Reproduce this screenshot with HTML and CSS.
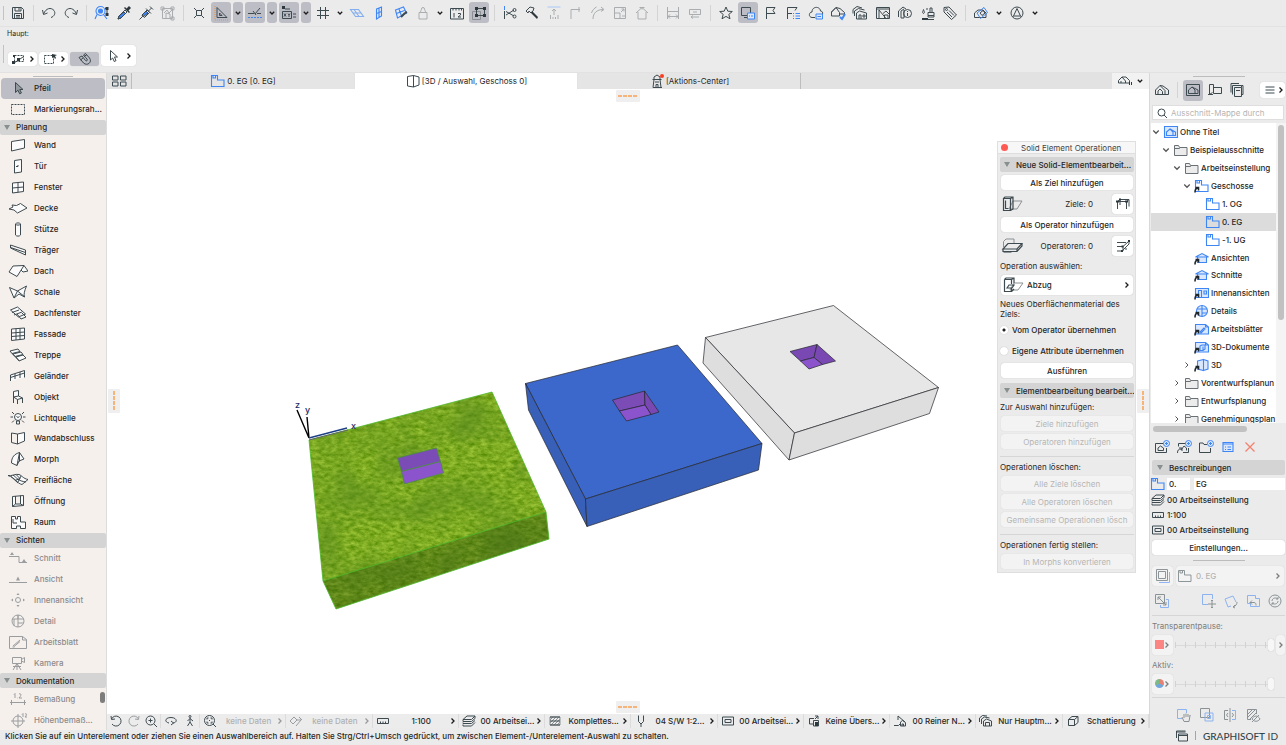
FILE: index.html
```
<!DOCTYPE html>
<html lang="de">
<head>
  <meta charset="UTF-8"/>
  <meta name="viewport" content="width=device-width, initial-scale=1.0"/>
  <title>Ohne Titel – 3D / Auswahl</title>
  <link rel="stylesheet" href="styles.css">
</head>
<body>
  <!-- shared symbols -->
  <svg class="sprite" aria-hidden="true">
    <symbol id="right" viewBox="0 0 6 8"><path d="M1.5 1.5L4 4 1.5 6.5"/></symbol>
    <symbol id="down" viewBox="0 0 8 6"><path d="M1.8 1.8L4 4l2.200-2.200"/></symbol>
    <symbol id="story" viewBox="0 0 16 14"><path d="M1.500 1.500h6v4.500h6.500v6.500h-12.500zM3 1.500v2.500h2.500v-2.500"/></symbol>
    <symbol id="folder" viewBox="0 0 16 14"><path class="fold" d="M1.500 2.500v10h12.500v-8h-7.500l-1-2zM1.500 5.500h5l1-1"/></symbol>
    <symbol id="house" viewBox="0 0 16 14"><path d="M1.500 12v-5l4.500-4.500 3 1 5 4v4.500zM4 12V8l2-2 2.500 2.500V12M6 2.500l5 5v4.500"/></symbol>
    <symbol id="link" viewBox="0 0 8 8"><path class="alias" d="M1 7.500c0-3 1-4.500 3-4.500M1.500 2.500h3v3"/></symbol>
    <symbol id="layers" viewBox="0 0 16 14"><path d="M2 5.500l4-3.500h8l-3.500 3.500zM2 5.500V7.500h8.500L14 4.500V2M2 8.500v1h8.500L14 6.500M2 10.500v1.500h8.500L14 8.500"/></symbol>
    <symbol id="scale" viewBox="0 0 16 14"><path d="M2.500 4.500h11v5h-11zM5.500 9.500v-2M8 9.500v-2M10.500 9.500v-2"/></symbol>
    <symbol id="frame" viewBox="0 0 16 14"><path d="M2.500 3h11v8h-11zM5 5.500h6v3H5z"/></symbol>
  </svg>

  <header class="toolbar">
    <i class="grip"></i>
    <button class="tb" aria-label="Sichern"><svg class="ic"><path d="M2.500 2.500h9l2 2v9h-11zM5 2.500V6h6V2.500M9 3v2.500M4.500 13.500v-5h7v5M6 10.500h4M6 12h4"/></svg></button>
    <i class="sep"></i>
    <button class="tb" aria-label="Widerrufen"><svg class="ic"><path d="M1.500 5l1 4.500 4-1.500M2.500 9C5 3 10 2 13 5.500c2 3 0 6-3 7"/></svg></button>
    <button class="tb" aria-label="Wiederholen"><svg class="ic"><path d="M14.500 5l-1 4.500-4-1.500M13.500 9C11 3 6 2 3 5.500c-2 3 0 6 3 7"/></svg></button>
    <i class="sep"></i>
    <button class="tb" aria-label="Suchen"><svg class="ic blue"><circle cx="6.500" cy="6" r="4.500"/><circle class="fillblue" cx="6.500" cy="6" r="2"/><path d="M3 9.500L1 14M9.500 9.500L13 14"/><path class="dark" d="M11 3.500h2V9.500"/><path class="solid" d="M11.500 2h3v3h-3zM11.500 8h3v3h-3z"/></svg></button>
    <button class="tb" aria-label="Parameter aufnehmen"><svg class="ic"><path class="fillblue" d="M2 14l1-3 5-4 1.500 1.500L5 13z"/><path d="M2 14l1-3 6-6 2 2-6 6z"/><path class="solid" d="M8 3l5 5 1-1-1.500-1.500L15 3l-2-2-2.500 2.500L9 2z"/></svg></button>
    <button class="tb" aria-label="Parameter übertragen"><svg class="ic"><path class="fillblue" d="M4 10l4-4 2 2-5 4z"/><path d="M1.500 14.500l3-3M4 10l5-5 2.500 2.500-5 5zM8 3.500L13 8.500M10.500 6l3-3M12 1.500L15 4.500"/></svg></button>
    <button class="tb" aria-label="Einpassen"><svg class="ic pale"><path d="M2.500 3.500h10v10h-10zM4 8l3-3 2 3 3-3M6 13V8l4 1v4"/><path d="M1 2h3v3H1zM11 2h3v3h-3zM11 12h3v3h-3z"/></svg></button>
    <i class="sep"></i>
    <button class="tb" aria-label="Fang"><svg class="ic"><path d="M5.500 5.500h5v5h-5zM3 3l2.500 2.500M13 3l-2.500 2.500M3 13l2.500-2.500M13 13l-2.500-2.500"/></svg></button>
    <button class="tb on" aria-label="Führungslinien"><svg class="ic"><path d="M4 2.500v10h10zM6.500 8v2.500H9z"/><path class="orange" d="M2 1v14h13"/></svg></button>
    <button class="dd on" aria-label="Mehr"><svg class="dn"><use href="#down"/></svg></button>
    <button class="tb on" aria-label="Fanghilfe"><svg class="ic"><path d="M1 8.500h6M6 6l3 4M8 9l5-6M10 8.500h4"/><path class="bluedash" d="M1 12.500h14"/></svg></button>
    <button class="dd on" aria-label="Mehr"><svg class="dn"><use href="#down"/></svg></button>
    <button class="tb on" aria-label="Tracker"><svg class="ic"><path d="M1.500 6.500h9v7h-9zM3 8.500l2 3M5 8.500l-2 3M7 8.500l1 1.500 1-1.500M8 10v2M12 9h3M12 12h3M4 4h5"/><path class="solid" d="M1 1h3v3H1z"/></svg></button>
    <button class="dd on" aria-label="Mehr"><svg class="dn"><use href="#down"/></svg></button>
    <button class="tb" aria-label="Raster"><svg class="ic"><path d="M5.500 2v12M10.500 2v12M2 5.500h12M2 10.500h12"/></svg></button>
    <button class="dd" aria-label="Mehr"><svg class="dn"><use href="#down"/></svg></button>
    <button class="tb" aria-label="Ebene"><svg class="ic blue faded"><path d="M1.500 4.500h8l5 7h-8zM4 8h8M5 4.500l5 7"/></svg></button>
    <button class="tb" aria-label="Vertikale Ebene"><svg class="ic blue"><path class="fillpale" d="M5.500 4l5-2v9l-5 3zM5.500 8.500l5-2M8 3v9.500"/></svg></button>
    <button class="tb" aria-label="Ebene wählen"><svg class="ic blue"><path d="M2.500 5l8-3 3 6-9 5zM6 4l2.500 7M3.500 8.500l8-3"/><path class="dark thick" d="M8 12l4-4M12 8l2-1"/></svg></button>
    <button class="tb" aria-label="Gewicht"><svg class="ic pale"><path d="M4 7.500h8v6.500H4zM5.500 7.500c0-2 1-2.500 1-3.500a1.500 1.500 0 1 1 3 0c0 1 1 1.500 1 3.500"/></svg></button>
    <button class="dd" aria-label="Mehr"><svg class="dn"><use href="#down"/></svg></button>
    <button class="tb" aria-label="Maße"><svg class="ic"><path d="M1.500 14V3.500h13V14zM4 3.500v2M7 3.500v2M10 3.500v2M12.500 3.500v2M5 8v4.500M9 8.500h2.500v1.500L9 12h3"/></svg></button>
    <button class="tb on" aria-label="Gruppierung"><svg class="ic"><path class="soft" d="M1.500 6.500h8v8h-8z"/><path d="M5.500 3.500h8v7h-8z"/><path class="solid" d="M4 2h3v3H4zM12 2h3v3h-3zM4 9h3v3H4zM12 9h3v3h-3z"/></svg></button>
    <i class="sep"></i>
    <button class="tb" aria-label="Trimmen"><svg class="ic"><path class="bluestroke" d="M2.500 1v4"/><path d="M2.500 6v8M4 10l8-5M4 6.500l8 4.500"/><circle cx="12.500" cy="5" r="1.500"/><circle cx="12.500" cy="11.500" r="1.500"/></svg></button>
    <button class="tb" aria-label="Anpassen"><svg class="ic"><path d="M2 6l4-4 4 1-1 3-2 2-2-2-1 2zM8 7l5 6"/><path class="solid" d="M8 6l6 6-1 2-6-6z"/></svg></button>
    <button class="tb" aria-label="Verlängern"><svg class="ic pale"><path class="bluestroke" d="M1.500 2h13"/><path d="M8 10V4M6 6l2-2 2 2M4.500 10v4M7 12v2M9.500 12v2M12 10v4"/></svg></button>
    <button class="tb" aria-label="Verschneiden"><svg class="ic pale"><path d="M3 14V4.500h9M11 2v5"/></svg></button>
    <button class="tb" aria-label="Abrunden"><svg class="ic pale"><path d="M3 14c0-6 4-9.500 10-9.500M11 2l3 2.500-3 2M1.500 8c1-3 3-5 5-6"/></svg></button>
    <button class="tb" aria-label="Größe ändern"><svg class="ic pale"><path d="M2.500 2.500h11v11h-11zM2.500 8H8v5.500M9 7l3-3M9.500 4H12v2.500M10 11h3"/></svg></button>
    <button class="tb" aria-label="Dach trimmen"><svg class="ic pale"><path d="M2 8l6-5.500L14 8M4 7v7h8V7M5.500 2.500h5M8 2.500v2"/></svg></button>
    <i class="sep"></i>
    <button class="tb" aria-label="Bemaßung oben"><svg class="ic pale"><path d="M2.500 2v12M13.500 2v12M2.500 6.500h11M3 11.500h10M5 9.500l-2 2 2 2M11 9.500l2 2-2 2"/></svg></button>
    <button class="tb" aria-label="Bemaßung unten"><svg class="ic pale"><path d="M2.500 4.500h11v5h-11zM4 12h8M6 7h4M6 10.500L4 12l2 1.500"/></svg></button>
    <i class="sep"></i>
    <div class="views">
      <button class="tb" aria-label="Favoriten"><svg class="ic"><path d="M8 2l1.800 4.200 4.500.3-3.500 2.900 1.200 4.400L8 11.400l-4 2.400 1.200-4.400L1.700 6.500l4.500-.3z"/></svg></button>
      <button class="tb on" aria-label="Bildschirm"><svg class="ic"><path d="M1.500 2.500h9v8h-9zM4 12.500h3"/><path class="bluestroke fillpale" d="M7.500 8h7v6h-7zM9 11h1M11 11h2"/></svg></button>
      <button class="tb" aria-label="Fahne"><svg class="ic"><path d="M3.500 14V2.500H12l-2 3 2 3H3.500"/></svg></button>
      <button class="tb" aria-label="Fahnenliste"><svg class="ic"><path d="M2.500 14V2.500H12l-2 3M2.500 8.500H7"/><path class="bluestroke" d="M8 8.500h1M10.500 8.500H15M8 11h1M10.500 11H15M8 13.500h1M10.500 13.500H15"/></svg></button>
      <button class="tb" aria-label="Cloud"><svg class="ic"><path d="M7 12.500H4C0 12 1 7 4 7c0-6 8-6 8.500-1 2 0 2.500 2 2 3"/><path class="bluestroke fillpale" d="M8 9h6.500v5H8zM9.500 11.500h3.500"/></svg></button>
      <button class="tb" aria-label="Prüfen"><svg class="ic"><path d="M1.500 11V7L6 2.500l4 1 4.500 4V9H9.500v2zM6 2.500l3.500 5V9M1.500 7L6 2.500"/><path class="bluestroke thick" d="M10 12l2 2 3-5"/></svg></button>
      <button class="tb" aria-label="Kopien"><svg class="ic"><path d="M4.500 14V8l3-2 7 2v6zM2.500 11V6l4-2.500 6 1.500M1 8.500V4.500l4-3L10 3M7 14v-4h2v4M11 10h2v2h-2z"/></svg></button>
      <button class="tb" aria-label="Layout"><svg class="ic"><path d="M1.500 2.500h13v11h-13zM1.500 4h13M4 13.500V5l7 8.500M8 8.500L11 6l3 3M9.500 13V10H13v3.500"/></svg></button>
      <button class="tb" aria-label="Info"><svg class="ic"><path d="M1.500 12V6L6 2l3 2M4 13V6l3-2M4 13h3V5"/><circle cx="10.500" cy="8.500" r="4"/><path d="M10.500 8v3M10.500 6v1"/></svg></button>
      <button class="tb" aria-label="Oberflächen"><svg class="ic"><path d="M8 7.500h6v3H8zM10 7.500V3h2v4.500M8 10.500V12h6v-1.500M2 14.500h12M3.500 8.500c-2-1 0-3 0-4 0 1 2 3 0 4M7 5V3"/><path class="solid" d="M2 13h6v1.500H2z"/></svg></button>
      <button class="tb" aria-label="Etikett"><svg class="ic"><path d="M2 2.500l5-.5 7.500 8-5 4.500L2 7zM5 7l5 5M7 5.500l5 5"/><circle cx="4.500" cy="4.500" r="1"/></svg></button>
    </div>
    <i class="sep"></i>
    <button class="tb" aria-label="Modell"><svg class="ic"><path d="M1.500 12.500V8L5 5h5l3 3v4.500z"/><path class="bluestroke" d="M4 8l7-5.500 3.500 5-7 6z"/><path d="M7 8l3-2.500 2 2.500-3 2.500z"/></svg></button>
    <button class="dd wide" aria-label="Mehr"><svg class="dn"><use href="#down"/></svg></button>
    <button class="tb" aria-label="BIMcloud"><svg class="ic"><circle cx="8" cy="8" r="6"/><path d="M8 3.500l3.500 7.500h-7zM4.500 11l-1 1M11.500 11l1 1"/></svg></button>
    <button class="dd wide" aria-label="Mehr"><svg class="dn"><use href="#down"/></svg></button>
  </header>

  <section class="infobox">
    <p>Haupt:</p>
    <div class="infobtns">
      <i class="grip"></i>
      <button class="pill" aria-label="Auswahlart"><svg class="ic"><path class="dots" d="M3.500 4.500h9v6h-9z"/><path d="M3 12L12 6"/><path class="solid" d="M1 10h3v3H1zM2 4h2v2H2zM6 7h3v3H6z"/></svg><svg class="rt"><use href="#right"/></svg></button>
      <button class="pill" aria-label="Markierung"><svg class="ic"><path class="dots" d="M2.500 4.500h9v8h-9z"/><path class="solid" d="M10 3l5 1-2 1 1 2-1 1-1-2-2 1z"/></svg><svg class="rt"><use href="#right"/></svg></button>
      <button class="pill on" aria-label="Magnet"><svg class="ic"><path d="M2 6.500L5 5l3.500 4.500c1 1 2.500 0 1.500-1.500L6.500 4l2-1.500L12.500 7c3 4-2 8.500-6 5zM3.500 9L6 7M7 5.500l3-2"/></svg></button>
      <button class="pill tall" aria-label="Pfeil"><svg class="ic"><path d="M5.500 2.500v9.500l2.200-2 1.500 3.500 1.800-.8L9.500 9h3z"/></svg><svg class="rt"><use href="#right"/></svg></button>
    </div>
  </section>

  <main>
    <nav class="toolbox">
      <i class="bar"></i>
      <button class="tool sel"><svg class="ti"><path class="arrowfill" d="M7.500 2.500v10l2.500-2.300 1.600 3.600 1.800-.8-1.600-3.500h3.200z"/></svg>Pfeil</button>
      <button class="tool"><svg class="ti"><path class="dots" d="M3.500 3.500h13v10h-13z"/></svg>Markierungsrah...</button>
      <button class="sec"><i></i>Planung</button>
      <button class="tool"><svg class="ti"><path class="w" d="M3.500 4.500l13-2v8.500l-13 3z"/></svg>Wand</button>
      <button class="tool"><svg class="ti"><path class="w" d="M6.500 2.500l7-1V14l-7 1zM8 8.500h2v-1.500"/></svg>Tür</button>
      <button class="tool"><svg class="ti"><path class="w" d="M4.500 4l11-1v9.500l-11 1.500zM10 3.500v10M4.500 9l11-1"/></svg>Fenster</button>
      <button class="tool"><svg class="ti"><path class="w" d="M1 9l4-2-1-2 4.500.500 4-2L19 8l-9.500 5L6 10z"/></svg>Decke</button>
      <button class="tool"><svg class="ti"><path class="w" d="M7.500 3v11c1 1.500 4 1.500 5 0V3M7.500 3c1 1.500 4 1.500 5 0-1-1.500-4-1.500-5 0z"/></svg>Stütze</button>
      <button class="tool"><svg class="ti"><path class="w" d="M2.500 3l15 5v5l-15-7zM2.500 3v2.500l15 5"/></svg>Träger</button>
      <button class="tool"><svg class="ti"><path class="w" d="M1 9l4-6 11-.500-7 11zM16 2.500L20 8l-5 1-2-2"/></svg>Dach</button>
      <button class="tool"><svg class="ti"><path class="w" d="M1.500 3.500l8 3.500 9-5c-2 5-3 8-2 11L11 10l-5 4zM6 14l3.500-7L17 13"/></svg>Schale</button>
      <button class="tool"><svg class="ti"><path class="w" d="M2.500 5l7-3 8 7-7 3zM4 7.500l7-2.500M6 10l8-3M9 9l4 5 5-2-4-4"/></svg>Dachfenster</button>
      <button class="tool"><svg class="ti"><path class="w" d="M3.500 3l13-1v11l-13 1.500zM8 2.500V14M12 2.500v11M3.500 7l13-1M3.500 10.500l13-1"/></svg>Fassade</button>
      <button class="tool"><svg class="ti"><path class="w" d="M2 4l8-2 2 2.500-8 2zM5 7l8-2 2 2.500-8 2zM8 10l7-2 3 3-7 3zM4 6.500l7 7"/></svg>Treppe</button>
      <button class="tool"><svg class="ti"><path class="w" d="M2.500 13V7l14-4.500v7M2.500 9.500l14-4.500M7 11V6M12 10V4"/></svg>Geländer</button>
      <button class="tool"><svg class="ti"><path class="w" d="M5.500 8V2.500l5-1V7M5.500 8l5-1 4 2-5 1.500zM5.500 8v6M9.500 10.500V15M14.500 9v5"/></svg>Objekt</button>
      <button class="tool"><svg class="ti"><circle class="w" cx="10" cy="7" r="3.500"/><path d="M8.500 11h3v3h-3zM8.500 6.500l1.500 1 1.500-1M2.500 7h2.500M15 7h2.500M4 2l2 2M16 2l-2 2M4 12.500l2-2M16 12.500l-2-2"/></svg>Lichtquelle</button>
      <button class="tool"><svg class="ti"><path d="M3.500 3l6 1v10l-6-1.500z"/><path class="w" d="M9.500 4l7-1.500V11l-7 3z"/></svg>Wandabschluss</button>
      <button class="tool"><svg class="ti"><path class="w" d="M3.500 12c0-6 3-9 8-10.500L16 8l-5 2-2 4.500zM11.500 1.500L9 14.500M11.500 1.500v9"/></svg>Morph</button>
      <button class="tool"><svg class="ti"><path class="w" d="M0 3.500c3 1 8-2 11-1s4 4 9 5l-6 5c-5-1-7-7-14-9M5 3c4 3 5 6 13 7M3 4.500L10 11M8 2.500l4 4-5 2M13 4l-3 6"/></svg>Freifläche</button>
      <button class="tool"><svg class="ti"><path class="w" d="M4.500 3.500l11-1v10l-11 1zM7.500 3v8h5V2.500M7.500 11l-3 2.500M12.500 11l3 1.500"/></svg>Öffnung</button>
      <button class="tool"><svg class="ti"><path class="w" d="M3.500 2.500h4V5h2V2.500h3V8h5v6.500h-5V12h-4v2.500h-5z"/><path d="M5 5v4h4"/></svg>Raum</button>
      <button class="sec"><i></i>Sichten</button>
      <button class="tool off"><svg class="ti"><path d="M1 6.500h10v6h8"/><path class="solid" d="M2 5l2-3 2 3zM14 12l2-3 2 3z"/></svg>Schnitt</button>
      <button class="tool off"><svg class="ti"><path d="M1 11.500h18"/><path class="solid" d="M8 9.500l2-4 2 4z"/></svg>Ansicht</button>
      <button class="tool off"><svg class="ti"><circle cx="10" cy="8" r="2.500"/><path class="solid" d="M5 6.500v3L3 8zM15 6.500v3L17 8zM8.500 3h3L10 1zM8.500 13h3L10 15z"/></svg>Innenansicht</button>
      <button class="tool off"><svg class="ti"><circle cx="10" cy="8" r="6"/><path d="M4 6h6V2M10 2v12M6 6v7M10 6h6M10 10h5.500"/></svg>Detail</button>
      <button class="tool off"><svg class="ti"><path d="M1.500 2.500h13l4 3v9h-17zM14.500 2.500V6h4M5 12l7-6M6 12.500l6-5M4.500 13h2"/></svg>Arbeitsblatt</button>
      <button class="tool off"><svg class="ti"><path d="M4.500 2.500h9v6h-9zM13.500 4.500l3-2v5l-3-1.500M9 8.500L5 15M9 8.500V15M9 8.500l4 6.500M5 11.500h8"/></svg>Kamera</button>
      <button class="sec"><i></i>Dokumentation</button>
      <button class="tool off"><svg class="ti"><path d="M2 11.500h16M3.500 9v5M16.500 9v5M6 3.500l1-1V7M9 7h.500M11 3c2-1 3 1 0 4h3"/></svg>Bemaßung</button>
      <button class="tool off"><svg class="ti"><circle cx="10" cy="9" r="5"/><path d="M3 9h14M10 2v14M14 2.500l1-1V5M17 2c2-1 2 1 0 3h2"/></svg>Höhenbemaß...</button>
      <i class="thumb"></i>
    </nav>

    <section class="center">
      <div class="tabs">
        <button class="overview" aria-label="Übersicht"><svg class="ic"><path d="M1.500 3h5.500v4H1.500zM9.500 3H15v4H9.500zM1.500 9h5.500v4H1.500zM9.500 9H15v4H9.500z"/></svg></button>
        <button class="tab"><svg class="st blue"><use href="#story"/></svg>0. EG [0. EG]</button>
        <button class="tab active"><svg class="ic"><path d="M2.500 3.500l6-1V14l-6-1zM8.500 2.500L14 4v8l-5.500 2"/></svg>[3D / Auswahl, Geschoss 0]</button>
        <button class="tab"><svg class="ic"><path d="M5 6.500h6l1 8H4zM5 6.500V4l3-2 3 2v2.500M4 14.500h9M6 9h4M7 14v-2.500h2V14M3.500 6.500h9"/><circle class="dot" cx="13" cy="3" r="2"/></svg>[Aktions-Center]</button>
        <span class="rest"></span>
        <button class="tabmore" aria-label="Ansichten"><svg class="ic"><path d="M1.500 10V7.500L5 4h4l3.500 3.500V10zM5 4l3.500 4v2M4 10V8"/><path class="solid" d="M12 9h1v3h-1zM14 9h1v3h-1z"/></svg><svg class="dn"><use href="#down"/></svg></button>
      </div>

      <div class="viewport">
        <svg class="scene" viewBox="107 89 1042 625">
          <defs>
            <filter id="grass" x="0" y="0" width="1" height="1" color-interpolation-filters="sRGB">
              <feTurbulence type="fractalNoise" baseFrequency=".16 .28" numOctaves="5" seed="7" result="n"/>
              <feColorMatrix in="n" values=".42 0 0 0 .28  .34 0 0 0 .5  .3 0 0 0 -.02  0 0 0 0 1" result="fine"/>
              <feTurbulence type="fractalNoise" baseFrequency=".025" numOctaves="2" seed="3"/>
              <feColorMatrix values="0 0 0 0 .34  0 0 0 0 .53  0 0 0 0 .12  1.200 0 0 0 -.42" result="patch"/>
              <feMerge result="m"><feMergeNode in="fine"/><feMergeNode in="patch"/></feMerge>
              <feComposite in="m" in2="SourceGraphic" operator="in"/>
            </filter>
          </defs>
          <g filter="url(#grass)"><path class="turf" d="M309 440L492 392 546 512 549 539 336 609 323 581z"/></g>
          <path class="shade" d="M323 581L546 512 549 539 336 609z"/>
          <path class="grassline" d="M309 440L492 392 546 512 549 539 336 609 323 581zM323 581L546 512"/>
          <g class="greenedge"><path class="p1" d="M397.500 458L436.500 448 440.500 461.500 401.500 471.500z"/><path class="p2" d="M401.500 471.500L440.500 461.500 443.500 473 404.500 484z"/></g>

          <g class="edge">
            <path class="b1" d="M525.500 383.500L677.500 345 762 443.500 585.500 499z"/>
            <path class="b2" d="M525.500 383.500L528.500 410 587 526.500 585.500 499z"/>
            <path class="b2" d="M585.500 499L762 443.500 758.500 470 587 526.500z"/>
            <path class="p1" d="M612.500 400L644.500 391 645 405 619.500 411z"/>
            <path class="p3" d="M644.500 391L659 412 651 414.500 645 405z"/>
            <path class="p2" d="M619.500 411L645 405 651 414.500 626.500 421z"/>
          </g>
          <g class="edge">
            <path class="g1" d="M705.500 337.500L833.500 305.500 938.500 387.500 794.500 433z"/>
            <path class="g2" d="M705.500 337.500L703 363 789 460 794.500 433z"/>
            <path class="g2" d="M794.500 433L938.500 387.500 929.500 413.500 789 460z"/>
            <path class="p3" d="M790 351.500L817 344.500 814 357.500 800.500 361z"/>
            <path class="p3" d="M817 344.500L835.500 361 822.500 364.500 814 357.500z"/>
            <path class="p2" d="M800.500 361L814 357.500 822.500 364.500 809 369z"/>
          </g>

          <path class="axis" d="M309 438L297 410M309 438L307 417"/>
          <path class="axisx" d="M309 438L347 428"/><path class="axisg" d="M309 440L348 430"/>
          <g class="axislabel"><text x="295" y="408">z</text><text x="305" y="413">y</text><text x="351" y="429">x</text></g>
        </svg>

        <i class="snap top"></i><i class="snap bottom"></i><i class="snap side left"></i><i class="snap side right"></i>

        <aside class="palette">
          <h2><button class="close" aria-label="Schließen"></button>Solid Element Operationen</h2>
          <div class="pbody">
            <button class="sec"><i></i>Neue Solid-Elementbearbeit...</button>
            <button class="btn">Als Ziel hinzufügen</button>
            <div class="prow">
              <svg class="pi"><path class="soft" d="M8 14l4-8h9l-5 8z"/><path class="bold" d="M2.500 3.500h7v12h-7zM2.500 3.500L4 2h8v12l-2.500 1.500M9.500 3.500L12 2M4.500 5.500v8h3"/></svg>
              <span>Ziele: 0</span>
              <button class="sq" aria-label="Ziele auswählen"><svg class="ic"><path d="M2.500 13V5.500h9V13M5 9V3.500M2.500 5.500L5 3.500h9v7M11.500 5.500l2.500-2"/><path class="solid" d="M1 4.500h3v2H1zM10 4.500h3v2h-3zM4 2.500h2v2H4z"/></svg></button>
            </div>
            <button class="btn">Als Operator hinzufügen</button>
            <div class="prow">
              <svg class="pi"><path class="soft" d="M2.500 10V4.500L5 2h8v5M2.500 15.500h8"/><path class="bold" d="M2 12l5-5.500h14L16 12zM2 12v2.500h14l5-5.500V6.500M16 12v2.500"/></svg>
              <span>Operatoren: 0</span>
              <button class="sq" aria-label="Operatoren auswählen"><svg class="ic"><path d="M2 4.500h9M2 8.500h5.500M2 13h5l7-7V3L8 8.500V13M10 11h2"/><path class="solid" d="M6.500 7.500h2v2h-2zM6 12h2v2H6zM13 2h2v2h-2z"/></svg></button>
            </div>
            <label for="op">Operation auswählen:</label>
            <div class="selwrap">
              <svg class="pi"><path class="soft" d="M8 14l4-7h9l-5 7z"/><path class="bold" d="M2.500 3.500h7V8M2.500 3.500v12h7V12M2.500 3.500L4 2h8v5M9.500 15.500L12 13M9.500 3.500L12 2M5 12l2-3h5l-2 3z"/></svg>
              <select id="op"><option>Abzug</option></select>
              <svg class="rt"><use href="#right"/></svg>
            </div>
            <p class="two">Neues Oberflächenmaterial des Ziels:</p>
            <label class="rad"><input type="radio" name="surf" checked>Vom Operator übernehmen</label>
            <label class="rad"><input type="radio" name="surf">Eigene Attribute übernehmen</label>
            <button class="btn">Ausführen</button>
            <button class="sec second"><i></i>Elementbearbeitung bearbeit...</button>
            <p>Zur Auswahl hinzufügen:</p>
            <button class="btn" disabled>Ziele hinzufügen</button>
            <button class="btn" disabled>Operatoren hinzufügen</button>
            <hr>
            <p>Operationen löschen:</p>
            <button class="btn" disabled>Alle Ziele löschen</button>
            <button class="btn" disabled>Alle Operatoren löschen</button>
            <button class="btn" disabled>Gemeinsame Operationen lösch</button>
            <hr>
            <p>Operationen fertig stellen:</p>
            <button class="btn" disabled>In Morphs konvertieren</button>
          </div>
        </aside>
      </div>

      <div class="quick">
        <div class="nav">
          <button aria-label="Zurück"><svg class="ic"><path d="M3.500 6A5 5 0 1 1 4 11M3 3l.500 3.500L7 6"/></svg></button>
          <button class="off" aria-label="Vor"><svg class="ic"><path d="M12.500 6A5 5 0 1 0 12 11M13 3l-.500 3.500L9 6"/></svg></button>
          <button aria-label="Vergrößern"><svg class="ic"><circle cx="7.500" cy="7.500" r="4.500"/><path d="M11 11l3 3M7.500 5.500v4M5.500 7.500h4"/></svg></button>
        </div>
        <div class="nav walk">
          <button aria-label="Orbit"><svg class="ic"><path d="M6 10C1 9 2 4.500 8 4.500s7 5 2 5.500M8 8l2.500 2L8 12"/></svg></button>
          <button aria-label="Gehen"><svg class="ic"><circle cx="8" cy="3.500" r="1"/><path d="M8 5v4l-2.500 4M8 9l2.500 4M5.500 8L8 5.500 11 8"/></svg></button>
        </div>
        <button class="q off"><svg class="ic dark"><circle cx="7.500" cy="7.500" r="5"/><path d="M11 11l3 3M5 6.500V5h1.500M8.500 5H10v1.500M5 8.500V10h1.500M8.500 10H10V8.500M7 7.500h1"/></svg><span>keine Daten</span><svg class="rt"><use href="#right"/></svg></button>
        <button class="q off"><svg class="ic"><path d="M2 8l4-4 3 3-4 4zM9 7h4l-5 6M11 4l3 3"/></svg><span>keine Daten</span><svg class="rt"><use href="#right"/></svg></button>
        <button class="q"><svg class="st"><use href="#scale"/></svg><span>1:100</span><svg class="rt"><use href="#right"/></svg></button>
        <button class="q"><svg class="st"><use href="#layers"/></svg><span>00 Arbeitsei...</span><svg class="rt"><use href="#right"/></svg></button>
        <button class="q"><svg class="st"><path class="soft" d="M3 3h10v8H3zM3 6l3-3M3 9l6-6M4 11l8-8M7 11l6-6M10 11l3-3"/><path d="M3 3h10M3 11h10M3 7h10"/></svg><span>Komplettes...</span><svg class="rt"><use href="#right"/></svg></button>
        <button class="q"><svg class="st"><path d="M5.500 1.500v6L8 10l2.500-2.500v-6M8 10v3"/></svg><span>04 S/W 1:2...</span><svg class="rt"><use href="#right"/></svg></button>
        <button class="q"><svg class="st"><use href="#frame"/></svg><span>00 Arbeitsei...</span><svg class="rt"><use href="#right"/></svg></button>
        <button class="q"><svg class="st"><path d="M7.500 10H3.500V4.500H8M7.500 6.500h5V12h-5zM9 2h3v3M12 2L9 5"/><path class="solid" d="M9 8h3v4H9z"/></svg><span>Keine Übers...</span><svg class="rt"><use href="#right"/></svg></button>
        <button class="q"><svg class="st"><path d="M2 11.500h4.500l2-2M6 2v4M6 2l7 6M8.500 12V8l2-1.500 3 2V12zM10 12v-2h1.500v2"/></svg><span>00 Reiner N...</span><svg class="rt"><use href="#right"/></svg></button>
        <button class="q"><svg class="st"><path d="M5.500 12V7l3-2 5 2v5zM3.500 10V5l3-2 5 1M1.500 8V4l3-2.500L9 2M7.500 12V8.500h4V12"/></svg><span>Nur Hauptm...</span><svg class="rt"><use href="#right"/></svg></button>
        <button class="q"><svg class="st"><path d="M3.500 5.500h6v6h-6zM3.500 5.500L7 2.500h6L9.500 5.500M13 2.500v6l-3.500 3"/></svg><span>Schattierung</span><svg class="rt"><use href="#right"/></svg></button>
      </div>
    </section>

    <aside class="navigator">
      <i class="bar"></i>
      <div class="modes">
        <button class="tb" aria-label="Projekt"><svg class="ic"><path d="M1.500 12.500V8L6 3.500l3 .5 5.500 4v4.500zM4 12.500V9l2-2 2.500 2.500v3M6 3.500l5 5v4"/></svg></button>
        <i class="sep"></i>
        <button class="tb on" aria-label="Ausschnitte"><svg class="ic"><path d="M1.500 2.500h13v11h-13zM3.500 11.500V8l3.500-3 6 3v3.500zM7 5l3 3v3.500"/></svg></button>
        <button class="tb" aria-label="Layoutbuch"><svg class="ic"><path d="M2.500 12.500v-10h4v6M2.500 12.500l3-2M6.500 5.500h8v6h-8zM1 12.500h5"/></svg></button>
        <button class="tb" aria-label="Publisher"><svg class="ic"><path d="M5.500 5.500h7v9h-7zM3.500 12.500v-9h9M2 10.500v-9h8M12.500 5.500v-2h1.500v9h-1.500M7 8.500h4"/></svg></button>
        <button class="pill menu" aria-label="Menü"><svg class="ic"><path d="M3.500 5h9M3.500 8h9M3.500 11h9"/></svg><svg class="rt"><use href="#right"/></svg></button>
      </div>
      <div class="search"><svg class="ic"><circle cx="7.500" cy="7.500" r="3.500"/><path d="M10 10l3 3"/></svg><input type="text" aria-label="Suchen" placeholder="Ausschnitt-Mappe durch"></div>

      <div class="treebox">
        <ul class="tree">
          <li class="l0"><svg class="tw"><use href="#down"/></svg><svg class="st blue"><path class="fillpale" d="M1.500 1.500h13v11h-13zM3.500 10.500V7L7 4l5.500 3v3.500zM7 4l3 3v3.500"/></svg><a href="#">Ohne Titel</a></li>
          <li class="l1"><svg class="tw"><use href="#down"/></svg><svg class="st"><use href="#folder"/></svg><a href="#">Beispielausschnitte</a></li>
          <li class="l2"><svg class="tw"><use href="#down"/></svg><svg class="st"><use href="#folder"/></svg><a href="#">Arbeitseinstellung</a></li>
          <li class="l3"><svg class="tw"><use href="#down"/></svg><svg class="st blue"><use href="#story"/><use href="#link" y="6" width="8" height="8"/></svg><a href="#">Geschosse</a></li>
          <li class="l4"><i class="tw"></i><svg class="st blue"><use href="#story"/></svg><a href="#">1. OG</a></li>
          <li class="l4 cur"><i class="tw"></i><svg class="st blue"><use href="#story"/></svg><a href="#">0. EG</a></li>
          <li class="l4"><i class="tw"></i><svg class="st blue"><use href="#story"/></svg><a href="#">-1. UG</a></li>
          <li class="l3"><i class="tw"></i><svg class="st blue"><path class="fillpale" d="M3.500 11.500V6h9v5.500zM1.500 6L8 2.500 14.500 6z"/><use href="#link" y="6" width="8" height="8"/></svg><a href="#">Ansichten</a></li>
          <li class="l3"><i class="tw"></i><svg class="st blue"><path class="fillpale" d="M3.500 11.500V6h9v5.500zM1.500 6L8 2.500 14.500 6z"/><use href="#link" y="6" width="8" height="8"/></svg><a href="#">Schnitte</a></li>
          <li class="l3"><i class="tw"></i><svg class="st blue"><path class="fillpale" d="M1.500 2.500h13v9h-13zM4.500 11V4.500h3V11M10 5h2.500v3H10z"/><use href="#link" y="6" width="8" height="8"/></svg><a href="#">Innenansichten</a></li>
          <li class="l3"><i class="tw"></i><svg class="st blue"><circle class="fillpale" cx="8" cy="7" r="5.500"/><path d="M3 5h5V1.500M8 1.500v11M8 5h5M8 9h5"/><use href="#link" y="6" width="8" height="8"/></svg><a href="#">Details</a></li>
          <li class="l3"><i class="tw"></i><svg class="st blue"><path class="fillpale" d="M1.500 2.500h10l3 2.500v7h-13zM11.500 2.500V5h3M6 10l4-4 1 1-4 4z"/><use href="#link" y="6" width="8" height="8"/></svg><a href="#">Arbeitsblätter</a></li>
          <li class="l3"><i class="tw"></i><svg class="st blue"><path class="fillpale" d="M1.500 2.500h10l3 2.500v7h-13zM11.500 2.500V5h3M6 6l2-1h3v4l-2 1.500H6zM9 6.500v4"/><use href="#link" y="6" width="8" height="8"/></svg><a href="#">3D-Dokumente</a></li>
          <li class="l3"><svg class="tr"><use href="#right"/></svg><svg class="st blue"><path class="fillpale" d="M3.500 3l6-1.500v11l-6-1.500zM9.500 1.500L14 3v8l-4.500 1.500"/><use href="#link" y="6" width="8" height="8"/></svg><a href="#">3D</a></li>
          <li class="l2"><svg class="tr"><use href="#right"/></svg><svg class="st"><use href="#folder"/></svg><a href="#">Vorentwurfsplanun</a></li>
          <li class="l2"><svg class="tr"><use href="#right"/></svg><svg class="st"><use href="#folder"/></svg><a href="#">Entwurfsplanung</a></li>
          <li class="l2"><svg class="tr"><use href="#right"/></svg><svg class="st"><use href="#folder"/></svg><a href="#">Genehmigungsplan</a></li>
        </ul>
        <div class="vscroll"><i></i></div>
      </div>
      <div class="hscroll"><i></i></div>

      <div class="actions">
        <button class="tb" aria-label="Ausschnitt sichern"><svg class="ic"><path d="M10 4.500H1.500v9h11V9M4 11.500V9l2.500-2 3 2v2.500z"/><path class="bluestroke fillpale" d="M12.500 1.500a3 3 0 1 1 0 6 3 3 0 1 1 0-6zM12.500 3v3M11 4.500h3"/></svg></button>
        <button class="tb" aria-label="Ausschnitt klonen"><svg class="ic"><path d="M10 4.500H2.500v3M7 13.500h5.500V9M5 11l3-4 2.500 2v2.500M1.500 14c0-3 1-4 4-4M3 9h3v3"/><path class="bluestroke fillpale" d="M12.500 1.500a3 3 0 1 1 0 6 3 3 0 1 1 0-6zM12.500 3v3M11 4.500h3"/></svg></button>
        <button class="tb" aria-label="Neue Mappe"><svg class="ic"><path d="M9 5.500H6L5 4H1.500v9.500h11V9"/><path class="bluestroke fillpale" d="M12.500 1.500a3 3 0 1 1 0 6 3 3 0 1 1 0-6zM12.500 3v3M11 4.500h3"/></svg></button>
        <button class="tb" aria-label="Eigenschaften"><svg class="ic blue"><path class="fillpale" d="M3 3.500h10v9H3zM3 5h10M5 8h1M7.500 8H11M5 10.500h1M7.500 10.500H11"/></svg></button>
        <button class="tb" aria-label="Löschen"><svg class="ic red"><path d="M3.500 3.500l9 9M12.500 3.500l-9 9"/></svg></button>
      </div>
      <button class="sec"><i></i>Beschreibungen</button>
      <div class="idrow"><svg class="st blue"><use href="#story"/></svg><input class="num" type="text" aria-label="Nummer" value="0."><input type="text" aria-label="Name" value="EG"></div>
      <p class="info"><svg class="st"><use href="#layers"/></svg>00 Arbeitseinstellung</p>
      <p class="info"><svg class="st"><use href="#scale"/></svg>1:100</p>
      <p class="info"><svg class="st"><use href="#frame"/></svg>00 Arbeitseinstellung</p>
      <button class="btn settings">Einstellungen...</button>
      <i class="bar"></i>

      <div class="trace">
        <div class="refrow">
          <button class="sq" aria-label="Transparentpause"><svg class="ic"><path class="bluestroke" d="M4 14.500h10.500V4"/><path d="M1.500 1.500h11v11h-11zM3.500 3.500h7v7h-7z"/></svg></button>
          <div class="selwrap"><svg class="st"><use href="#story"/></svg><select aria-label="Referenz"><option>0. EG</option></select><svg class="rt"><use href="#right"/></svg></div>
        </div>
        <div class="refs">
          <button class="tb" aria-label="Tauschen"><svg class="ic"><path class="bluestroke" d="M12 6.500h2.500v8h-8V12"/><path d="M1.500 1.500h9v9h-9zM4 4l8 8M4 7V4h3M12 9v3H9"/></svg></button>
          <span></span>
          <button class="tb" aria-label="Verschieben"><svg class="ic"><path class="bluestroke" d="M7 11.500H1.500v-10h10V6"/><path d="M11 7v8M7 11h8M10 8l1-1 1 1M10 14l1 1 1-1"/></svg></button>
          <button class="tb" aria-label="Drehen"><svg class="ic"><path class="bluestroke" d="M8 13l-3 1-3-8 8-3 3 6"/><path d="M14 9c0 2-1 4-4 5M12 12l-2 2 2 1"/></svg></button>
          <button class="tb" aria-label="Zurücksetzen"><svg class="ic"><path class="bluestroke" d="M2.500 2.500h8v3h4v8h-9v-3h-3z"/><path d="M7 7.500L5 9.500l2 2M5 9.500h4c2 0 2 2 2 3"/></svg></button>
          <button class="tb" aria-label="Aktualisieren"><svg class="ic"><circle cx="8" cy="8" r="6"/><path d="M5 8c0-3 4-4 6-2M11 8c0 3-4 4-6 2M11 4v2H9M5 12v-2h2"/></svg></button>
        </div>
        <hr>
        <label for="t1">Transparentpause:</label>
        <div class="slide"><button class="sq" aria-label="Farbe der Pause"><i class="redbox"></i><svg class="rt"><use href="#right"/></svg></button><input id="t1" type="range" value="100"><button class="sq thin" aria-label="Mehr"><svg class="rt"><use href="#right"/></svg></button></div>
        <label for="t2">Aktiv:</label>
        <div class="slide"><button class="sq" aria-label="Aktive Farbe"><i class="wheel"></i><svg class="rt"><use href="#right"/></svg></button><input id="t2" type="range" value="100"><span class="thin"></span></div>
        <hr>
        <div class="foot">
          <button class="tb" aria-label="Ziehen"><svg class="ic"><path class="bluestroke" d="M6 11.500H1.500v-9h9V6"/><path d="M6 10l2 4.500h5l1-6M8 11V7M10 10V6.500M12 10V7M14 9V8"/></svg></button>
          <button class="tb" aria-label="Überlagern"><svg class="ic"><path d="M1.500 1.500h9v9h-9z"/><path class="bluestroke" d="M6 6h8v8H6zM8.500 8.500h3v3h-3z"/></svg></button>
          <button class="tb" aria-label="Teiler"><svg class="ic"><path d="M6 3.500H2.500v9H6M8 1v14M6 6L4.500 8 6 10M10 6l1.500 2-1.500 2"/><path class="bluestroke" d="M10 3.500h3.500v9H10"/></svg></button>
          <button class="tb" aria-label="Ausblenden"><svg class="ic"><path d="M6 12.500H2.500v-10h9V7M3 7l4-4M3 10l7-7M5 12l6-6M7 12c2-4 6-4 8 0-2 3-6 3-8 0M7 15l7-7"/></svg></button>
        </div>
      </div>
    </aside>
  </main>

  <footer>
    <p>Klicken Sie auf ein Unterelement oder ziehen Sie einen Auswahlbereich auf. Halten Sie Strg/Ctrl+Umsch gedrückt, um zwischen Element-/Unterelement-Auswahl zu schalten.</p>
    <svg class="ic"><path d="M4.500 6h9v7h-9zM2.500 10V3h9M2.500 4h9M4.500 7.500h9"/></svg>
    <i class="line"></i>
    <a href="#" class="brand"><b>GRAPHISOFT</b> ID</a>
  </footer>
</body>
</html>
```
FILE: styles.css
```
* { box-sizing:border-box; }
body { margin:0; height:100vh; display:flex; flex-direction:column; overflow:hidden; background:#ebebeb; color:#262626; font:500 8px/10px Inter,"Liberation Sans",sans-serif; }
button,input,select { font:inherit; color:inherit; border:0; margin:0; padding:0; background:none; }
button { display:flex; align-items:center; justify-content:center; white-space:nowrap; }
p,h2,ul { margin:0; padding:0; }
a { color:inherit; text-decoration:none; }
hr { border:0; border-top:1px solid #d6d6d6; margin:0; }

/* icons */
svg { fill:none; stroke:#3d4a50; stroke-width:1; flex:none; }
.sprite { position:absolute; width:0; height:0; }
.ic { width:16px; height:16px; }
.st { width:16px; height:14px; }
.ti { width:20px; height:16px; }
.pi { width:22px; height:18px; }
.rt { width:6px; height:8px; stroke:#1c1c1c; stroke-width:1.3; }
.dn { width:8px; height:6px; stroke:#1c1c1c; stroke-width:1.3; }
.soft { stroke:#8b9194; }
.bold { stroke-width:1.2; }
.fold { stroke:#697175; fill:#ececec; }
.pale { stroke:#a9adaf; }
.blue,.bluestroke { stroke:#3f86f5; }
.blue { stroke-width:1.1; }
.pale .bluestroke { stroke:#a9c8f5; }
.faded { opacity:.6; }
.red { stroke:#f4826f; stroke-width:1.3; }
.dark { stroke:#3d4a50; }
.thick { stroke-width:2; }
.fillblue { fill:#3f86f5; }
.fillpale { fill:#dbe8fc; }
.solid { fill:#2d383d; stroke:none; }
.w { fill:#fbfbfb; }
.alias { stroke:#1e272b; stroke-width:1.6; }
.orange { stroke:#f0903c; stroke-dasharray:1 1; }
.bluedash { stroke:#3f86f5; stroke-dasharray:2 1; }
.dots { stroke-dasharray:2 1; }
.arrowfill { fill:#93999c; }
.dot { fill:#ff3b1f; stroke:none; }

/* top toolbar */
.toolbar { display:flex; align-items:center; gap:2px; height:27px; padding:0 0 1px 3px; border-bottom:1px solid #e2e2e2; }
.tb { width:20px; height:21px; border-radius:3px; flex:none; }
.dd { width:10px; height:21px; border-radius:3px; flex:none; }
.wide { width:12px; }
.on { background:#bdbdc5; }
.sep { width:7px; height:16px; flex:none; background:linear-gradient(#d3d3d3,#d3d3d3) center/1px 100% no-repeat; }
.grip { width:1px; height:14px; margin-right:2px; background:#c2c2c2; flex:none; }
.views { display:flex; justify-content:space-between; width:244px; }

.infobox { height:46px; flex:none; border-bottom:1px solid #e2e2e2; }
.infobox p { padding:2px 0 0 7px; font-size:7px; font-weight:400; }
.infobtns { display:flex; align-items:flex-end; gap:2px; padding:6px 0 0 3px; }
.infobtns .grip { align-self:flex-start; height:18px; }
.pill { width:29px; height:14px; gap:2px; border-radius:3px; background:#fff; box-shadow:0 0 1px #bbb; }
.pill.on { background:#bdbdc5; }
.pill.tall { width:35px; height:21px; gap:5px; }

main { flex:1; min-height:0; display:flex; }
.bar { display:block; width:40px; height:1px; margin:3px auto 1px; background:#bcbcbc; flex:none; }

/* toolbox */
.toolbox { width:107px; flex:none; margin-bottom:-2px; display:flex; flex-direction:column; position:relative; background:#f6f0ed; border-right:1px solid #dcdcdc; }
.tool { flex:1; min-height:0; justify-content:flex-start; gap:6px; padding-left:8px; margin-right:1px; }
.sel { background:#bdbdc5; border-radius:4px; margin-left:1px; padding-left:7px; }
.off { color:#8b8b8b; }
.off svg { stroke:#9a9da0; }
.off .solid { fill:#9a9da0; }
.off svg.dark { stroke:#3d4a50; }
.sec { width:100%; height:15px; flex:none; justify-content:flex-start; gap:6px; padding-left:4px; background:#d4d4d4; border-radius:2px; }
.sec i { border:3px solid transparent; border-top:5px solid #87908f; border-bottom:0; }
.thumb { position:absolute; right:1px; bottom:27px; width:5px; height:11px; border-radius:3px; background:#7d7d7d; }

/* tabs */
.center { flex:1; min-width:0; display:flex; flex-direction:column; }
.tabs { display:flex; height:16px; flex:none; background:#e2e2e2; font-weight:400; }
.overview { width:25px; border-right:1px solid #bdbdbd; }
.tab { width:223px; gap:1px; background:#e5e5e5; border-right:1px solid #e2e2e2; }
.tab:nth-child(4) { border-color:#bdbdbd; }
.tab.active { background:#fff; }
.rest { flex:1; }
.tabmore { width:37px; gap:3px; background:#f2f2f2; }

/* 3D window */
.viewport { flex:1; min-height:0; position:relative; background:#fff; }
.scene { display:block; width:100%; height:100%; }
.turf { fill:#7aa823; stroke:none; }
.shade { fill:#1f3a05; fill-opacity:.3; stroke:none; }
.grassline { stroke:#4db82c; stroke-width:.8; }
.greenedge { stroke:#4b8b45; stroke-width:.8; }
.edge { stroke:#25262c; stroke-width:.7; stroke-linejoin:round; }
.b1 { fill:#3d68cb; }
.b2 { fill:#3860b9; }
.g1 { fill:#e7e7e7; }
.g2 { fill:#dedede; }
.p1 { fill:#7b4cb5; }
.p2 { fill:#8b54cc; }
.p3 { fill:#7948b3; }
.axis { stroke:#000; stroke-width:1.4; }
.axisx { stroke:#1d3f86; stroke-width:1.4; }
.axisg { stroke:#666; }
.axislabel { fill:#1c2c66; stroke:none; font-size:9px; }
.snap { position:absolute; display:flex; align-items:center; justify-content:center; width:24px; height:12px; background:#efefef; border-radius:1px; }
.snap::after { content:""; width:20px; height:2px; background:repeating-linear-gradient(90deg,#f7b47a 0 4px,transparent 4px 5px); }
.snap.top { top:1px; left:calc(50% - 12px); }
.snap.bottom { bottom:1px; left:calc(50% - 12px); }
.snap.side { top:300px; width:12px; height:24px; }
.snap.side::after { width:2px; height:20px; background:repeating-linear-gradient(#f7b47a 0 4px,transparent 4px 5px); }
.snap.left { left:1px; }
.snap.right { right:0; }

/* floating palette */
.palette { position:absolute; top:52px; right:13px; width:139px; background:#ebebeb; border:1px solid #dfdfdf; }
.palette h2 { display:flex; align-items:center; gap:13px; height:12px; padding-left:3px; background:#f7f7f7; border-bottom:1px solid #dedede; font-size:8px; font-weight:400; color:#444; }
.close { width:7px; height:7px; border-radius:50%; background:#ff5a52; }
.pbody { padding:3px 1px 3px 2px; display:flex; flex-direction:column; gap:3px; }
.pbody p,.pbody>label { font-weight:400; }
.pbody p { padding-bottom:1px; }
.pbody .sec { overflow:hidden; }
.btn { height:15px; margin:0 1px; border-radius:3px; background:#fff; box-shadow:0 0 1px #aaa; overflow:hidden; }
.btn:disabled { color:#b6b6b6; background:#f3f3f3; box-shadow:0 0 1px #c8c8c8; font-weight:400; }
.prow { display:flex; align-items:center; height:21px; padding:0 1px; }
.prow span { flex:1; text-align:right; padding-right:19px; font-weight:400; }
.sq { width:21px; height:20px; flex:none; border-radius:3px; background:#fff; box-shadow:0 0 1px #aaa; }
.pbody>label[for] { padding-top:2px; }
.selwrap { display:flex; align-items:center; height:20px; margin:1px; padding:0 3px 0 1px; border-radius:3px; background:#fff; box-shadow:0 0 1px #aaa; }
.selwrap select { flex:1; min-width:0; appearance:none; padding-left:3px; }
.pbody .two { margin-bottom:-2px; }
.rad { display:flex; align-items:center; height:18px; gap:4px; }
.pbody>.rad { font-weight:500; }
.rad input { appearance:none; width:8px; height:8px; border-radius:50%; background:#fff; box-shadow:0 0 1px #aaa; }
.rad input:checked { background:radial-gradient(#222 1px,#fff 2px); }
.second { margin:2px 0 1px; }
.pbody hr { margin:4px 0 2px; }

/* quick options */
.quick { display:flex; height:14px; flex:none; background:#ececec; }
.nav { display:flex; width:54px; align-items:center; border-right:1px solid #dcdcdc; }
.nav button { flex:1; }
.walk { width:39px; }
.q { flex:1; min-width:0; padding:0 2px 0 2px; border-right:1px solid #dcdcdc; }
.q span { flex:1; padding-left:2px; text-align:center; }
.quick .off { color:#b0b0b0; }
.quick .off .rt { stroke:#999; }

/* navigator */
.navigator { width:137px; flex:none; display:flex; flex-direction:column; padding:0 1px 0 2px; border-left:1px solid #d8d8d8; }
.navigator .bar { width:52px; }
.modes { display:flex; align-items:center; gap:2px; height:22px; margin-top:1px; }
.modes .sep { width:7px; }
.menu { width:25px; height:16px; margin-left:auto; gap:0; }
.search { display:flex; align-items:center; height:15px; margin:4px 1px 3px 0; padding-left:1px; background:#fff; border:1px solid #dedede; }
.search input { flex:1; min-width:0; margin-left:1px; font-weight:400; }
.search input::placeholder { color:#b5b5b5; opacity:1; }
.treebox { flex:1; min-height:0; display:flex; margin:0 -1px; overflow:hidden; background:#fff; }
.tree { flex:1; min-width:0; height:calc(100% + 5px); list-style:none; display:grid; grid-auto-rows:1fr; overflow:hidden; }
.tree li { display:flex; align-items:center; white-space:nowrap; min-width:0; }
.tree a { margin-left:1px; }
.tw,.tr { width:10px; height:8px; margin-right:2px; stroke:#555; stroke-width:1; flex:none; }
.l1 { padding-left:10px; }
.l2 { padding-left:21px; }
.l3 { padding-left:31px; }
.l4 { padding-left:42px; }
.cur { background:#dcdcdc; }
.vscroll { width:10px; padding:2px; background:#f4f4f4; }
.vscroll i { display:block; width:6px; height:66%; border-radius:3px; background:#c1c1c1; }
.hscroll { height:12px; padding:3px 1px; flex:none; }
.hscroll i { display:block; width:94px; height:6px; border-radius:3px; background:#c1c1c1; }
.actions { display:flex; gap:2px; height:25px; padding-bottom:2px; align-items:center; }
.navigator .sec { padding-left:5px; }
.idrow { display:flex; align-items:center; height:17px; gap:4px; }
.idrow svg { margin:0 -3px 0 -2px; }
.idrow input { flex:1; min-width:0; height:12px; padding-left:2px; background:#fff; }
.idrow .num { flex:none; width:23px; }
.info { display:flex; align-items:center; height:15px; margin-left:-2px; gap:1px; }
.settings { margin:3px 0 2px; flex:none; }

/* trace and reference, inactive */
.trace { color:#7d7d7d; }
.trace svg { opacity:.55; }
.trace .sq,.trace .selwrap { background:#f3f3f3; box-shadow:0 0 1px #c4c4c4; }
.trace label { display:block; height:14px; padding-top:3px; font-weight:400; }
.refrow { display:flex; gap:2px; margin-top:3px; align-items:center; }
.refrow .selwrap { flex:1; color:#b4b4b4; }
.refs { display:flex; gap:2px; align-items:center; height:27px; }
.refs span { flex:1; }
.trace hr { margin:1px 0 2px; }
.slide + hr { padding-top:2px; }
.slide { display:flex; align-items:center; gap:2px; height:25px; }
.slide input { flex:1; min-width:0; height:10px; appearance:none; background:linear-gradient(90deg,#d2d2d2 1px,transparent 1px) 0 2px/10px 6px repeat-x,linear-gradient(#dadada,#dadada) 0 5px/100% 1px no-repeat; }
.slide input::-webkit-slider-thumb { appearance:none; width:6px; height:12px; border-radius:2px; background:#f7f7f7; box-shadow:0 0 1px #aaa; }
.thin { width:9px; flex:none; }
.redbox { width:9px; height:9px; background:#fa8582; }
.wheel { width:9px; height:9px; border-radius:50%; background:conic-gradient(#e58276 0 33%,#70a6dc 33% 66%,#7cba86 66%); }
.foot { display:flex; justify-content:center; gap:3px; height:26px; align-items:center; }

footer { display:flex; align-items:center; height:17px; flex:none; padding:0 8px 2px 5px; }
footer p { flex:1; }
.line { width:1px; height:9px; margin:0 7px 0 5px; background:#a5a5a5; }
.brand { font:400 10px/12px Lato,sans-serif; color:#33444c; }
.brand b { font-weight:500; }
```
